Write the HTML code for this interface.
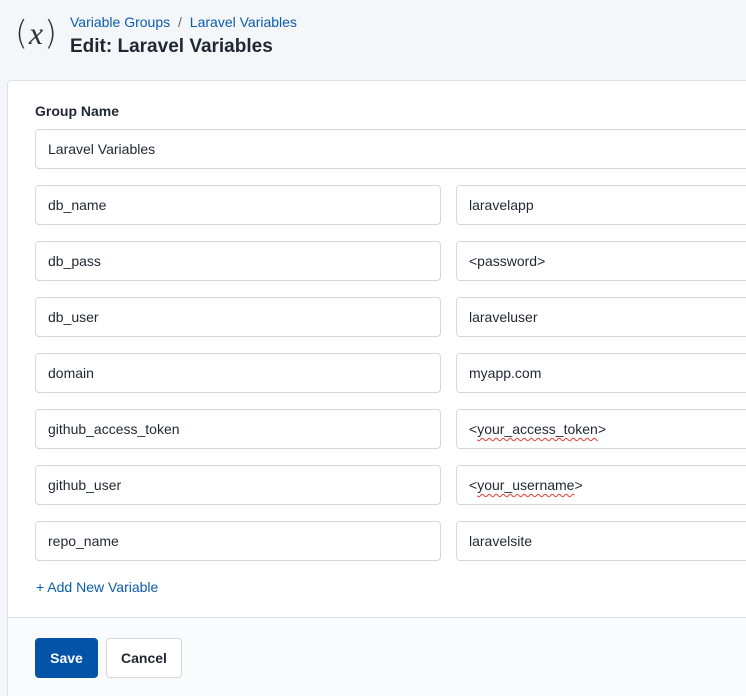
<html style="overflow:hidden;height:696px"><head><style>
body{margin:0;width:746px;height:696px;background:#f5f6fa;font-family:"Liberation Sans",sans-serif;position:relative;overflow:hidden;color:#1f2733}
.a{position:absolute}
.card{left:7px;top:80px;width:760px;height:620px;background:#fff;border:1px solid #dcdfe6;border-radius:4px}
.in{position:absolute;height:38px;border:1px solid #d3d7de;border-radius:4px;background:#fff;font-size:14px;line-height:38px;padding-left:12px;box-sizing:content-box;color:#1f2733}
.l{left:35px;width:392px}
.r{left:456px;width:320px}
.sq{text-decoration:underline wavy #e53935;text-decoration-thickness:1px;text-underline-offset:3px}
</style></head><body>
<div class="a" style="left:15px;top:13px;font-size:33px;line-height:40px;font-family:'DejaVu Sans',sans-serif;font-weight:200;color:#333">(<i style="font-family:'Liberation Serif',serif;font-size:32px;margin:0 1px">x</i>)</div>
<div class="a" style="left:70px;top:14px;font-size:14px;color:#0b5cad">Variable Groups <span style="color:#666;margin:0 4px">/</span> Laravel Variables</div>
<div class="a" style="left:70px;top:36px;font-size:19px;font-weight:bold;color:#1f2733">Edit: Laravel Variables</div>
<div class="a card"></div>
<div class="a" style="left:8px;top:617px;width:760px;height:80px;background:#fafbfd;border-top:1px solid #dcdfe6"></div>
<div class="a" style="left:35px;top:103px;font-size:14px;font-weight:bold">Group Name</div>
<div class="in" style="left:35px;top:129px;width:720px">Laravel Variables</div>
<div class="in l" style="top:185px">db_name</div><div class="in r" style="top:185px">laravelapp</div>
<div class="in l" style="top:241px">db_pass</div><div class="in r" style="top:241px">&lt;password&gt;</div>
<div class="in l" style="top:297px">db_user</div><div class="in r" style="top:297px">laraveluser</div>
<div class="in l" style="top:353px">domain</div><div class="in r" style="top:353px">myapp.com</div>
<div class="in l" style="top:409px">github_access_token</div><div class="in r" style="top:409px">&lt;<span class="sq">your_access_token</span>&gt;</div>
<div class="in l" style="top:465px">github_user</div><div class="in r" style="top:465px">&lt;<span class="sq">your_username</span>&gt;</div>
<div class="in l" style="top:521px">repo_name</div><div class="in r" style="top:521px">laravelsite</div>
<div class="a" style="left:36px;top:579px;font-size:14px;color:#0b5cad">+ Add New Variable</div>
<div class="a" style="left:35px;top:638px;width:63px;height:40px;background:#0353a8;border-radius:4px;color:#fff;font-weight:bold;font-size:14px;line-height:40px;text-align:center">Save</div>
<div class="a" style="left:106px;top:638px;width:74px;height:38px;background:#fff;border:1px solid #d3d7de;border-radius:4px;font-weight:bold;font-size:14px;line-height:38px;text-align:center">Cancel</div>
</body></html>
